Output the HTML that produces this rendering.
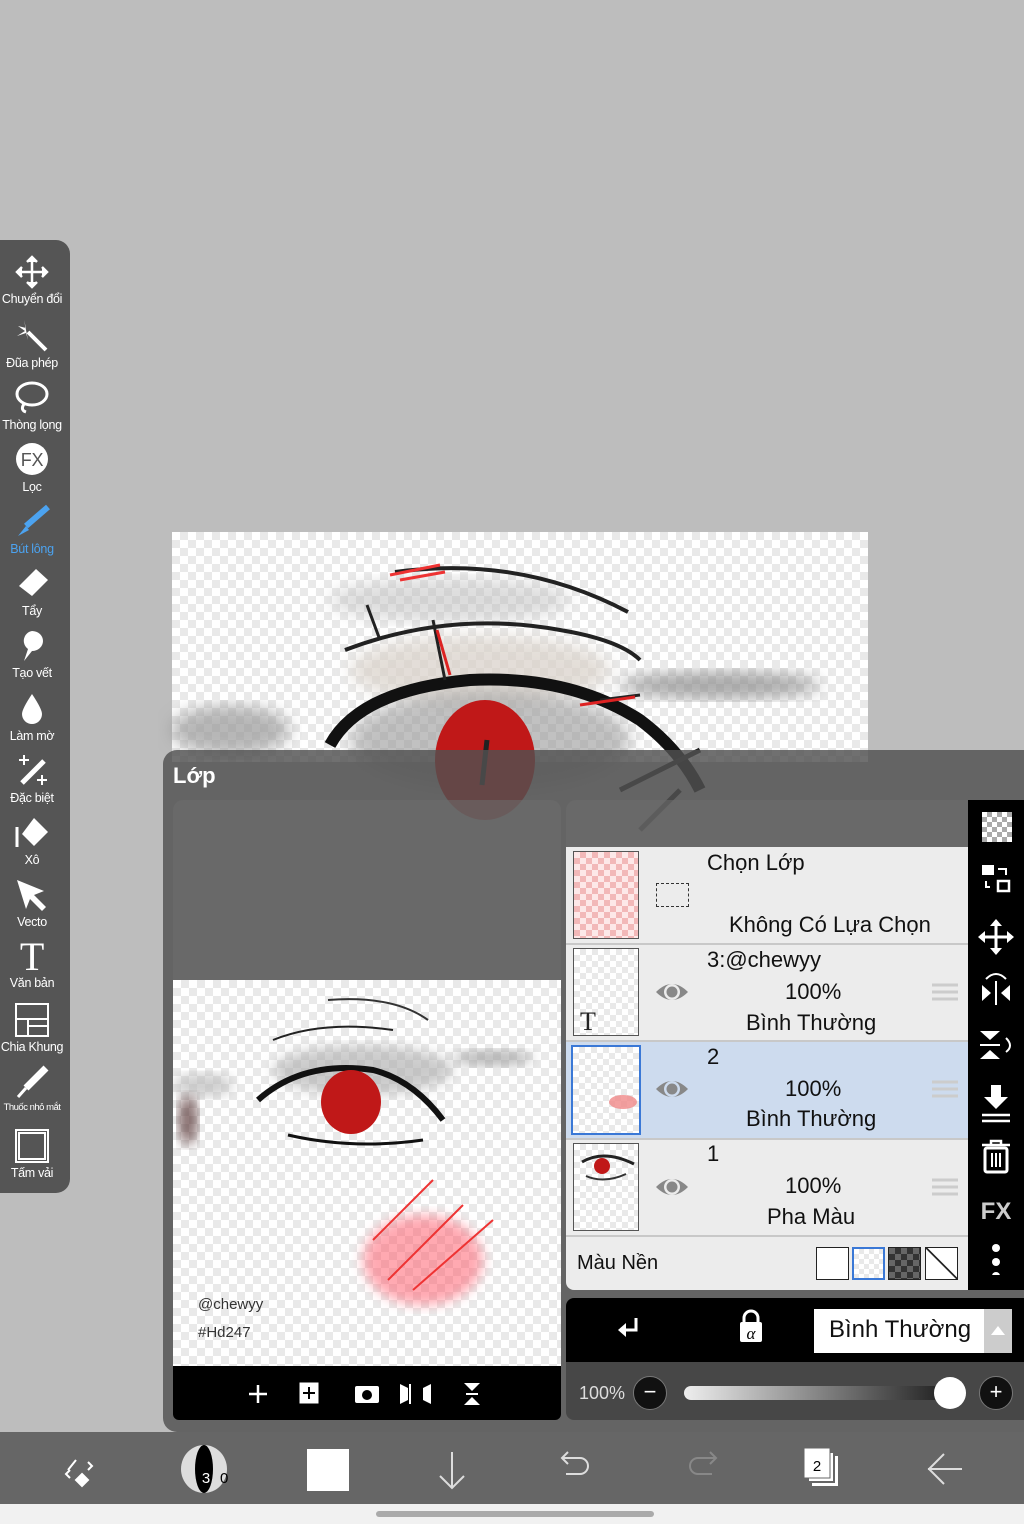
<!DOCTYPE html>
<html><head><meta charset="utf-8"><style>
*{margin:0;padding:0;box-sizing:border-box}
body{width:1024px;height:1524px;background:#bdbdbd;position:relative;overflow:hidden;font-family:"Liberation Sans","DejaVu Sans",sans-serif}
.abs{position:absolute}
.chk{background:repeating-conic-gradient(#e9e9e9 0 25%,#fff 0 50%) 0 0/16px 16px}
.tb{left:0;top:240px;width:70px;height:953px;background:#555;border-radius:0 14px 14px 0}
.tool{position:absolute;left:-4px;width:72px;text-align:center;color:#fff;font-size:12.5px;white-space:nowrap;letter-spacing:-0.3px}
.tool svg{display:block;margin:0 auto 2px}
.rowtxt{position:absolute;color:#111;font-size:22px}
</style></head><body>

<!-- canvas -->
<div class="abs chk" style="left:172px;top:532px;width:696px;height:230px"></div>
<svg class="abs" style="left:0;top:0" width="1024" height="1524">
<defs><filter id="b"><feGaussianBlur stdDeviation="8"/></filter></defs>
<g>
<ellipse cx="450" cy="600" rx="120" ry="22" fill="#bbb" opacity=".5" filter="url(#b)"/>
<ellipse cx="720" cy="685" rx="100" ry="14" fill="#888" opacity=".7" filter="url(#b)"/>
<ellipse cx="230" cy="730" rx="60" ry="25" fill="#999" opacity=".7" filter="url(#b)"/>
<ellipse cx="480" cy="670" rx="130" ry="35" fill="#d8d0c8" opacity=".7" filter="url(#b)"/>
<ellipse cx="490" cy="740" rx="140" ry="50" fill="#999" opacity=".6" filter="url(#b)"/>
<path d="M395 572 Q520 555 628 612" stroke="#222" stroke-width="4" fill="none"/>
<path d="M390 575 L440 565 M400 580 L445 572" stroke="#e33" stroke-width="3"/>
<path d="M345 650 Q450 610 560 630 Q620 640 640 660" stroke="#222" stroke-width="4" fill="none"/>
<path d="M330 745 Q360 690 470 680 Q570 675 640 720 Q680 750 700 790" stroke="#111" stroke-width="12" fill="none"/>
<path d="M367 605 L380 640 M433 620 L445 680 M600 700 L640 695" stroke="#222" stroke-width="3"/>
<path d="M437 630 L450 675 M580 705 L635 697" stroke="#d22" stroke-width="3"/>
<ellipse cx="485" cy="760" rx="50" ry="60" fill="#c01818"/>
<path d="M487 740 L482 785" stroke="#222" stroke-width="5"/>
<path d="M620 790 Q660 770 700 750 M640 830 L680 790" stroke="#222" stroke-width="5"/>
</g>
</svg>

<!-- toolbar -->
<div class="abs tb"></div>
<div class="tool" style="top:254px"><svg width="36" height="36" viewBox="0 0 36 36" fill="none" stroke="#fff" stroke-width="2.5"><path d="M18 3V33M3 18H33"/><path d="M13 8l5-5 5 5M13 28l5 5 5-5M8 13l-5 5 5 5M28 13l5 5-5 5" fill="#fff"/></svg>Chuyển đổi</div>
<div class="tool" style="top:318px"><svg width="36" height="36" viewBox="0 0 36 36"><path d="M14 14L32 32" stroke="#fff" stroke-width="4"/><path d="M10 2L12 10L4 8L11 13L3 18L12 15L14 22" fill="#fff"/></svg>Đũa phép</div>
<div class="tool" style="top:380px"><svg width="36" height="36" viewBox="0 0 36 36" fill="none" stroke="#fff" stroke-width="3"><ellipse cx="18" cy="14" rx="15" ry="11"/><path d="M10 24q-4 6 2 8"/></svg>Thòng lọng</div>
<div class="tool" style="top:442px"><svg width="36" height="36" viewBox="0 0 36 36"><circle cx="18" cy="17" r="16" fill="#fff"/><text x="18" y="24" font-size="18" text-anchor="middle" fill="#555" font-family="Liberation Sans">FX</text></svg>Lọc</div>
<div class="tool" style="top:504px;color:#4ca3f0"><svg width="36" height="36" viewBox="0 0 36 36"><path d="M34 3L12 22" stroke="#4ca3f0" stroke-width="6"/><path d="M12 22L4 32L15 26Z" fill="#4ca3f0"/></svg>Bút lông</div>
<div class="tool" style="top:566px"><svg width="36" height="36" viewBox="0 0 36 36"><path d="M22 3L34 14L18 30L5 20Z" fill="#fff"/></svg>Tẩy</div>
<div class="tool" style="top:628px"><svg width="36" height="36" viewBox="0 0 36 36"><path d="M18 3a11 10 0 1 1 0 20l-8 10l4-12a10 10 0 0 1 4-18z" fill="#fff"/></svg>Tạo vết</div>
<div class="tool" style="top:691px"><svg width="36" height="36" viewBox="0 0 36 36"><path d="M18 3Q28 18 28 23a10 10 0 0 1-20 0Q8 18 18 3z" fill="#fff"/></svg>Làm mờ</div>
<div class="tool" style="top:753px"><svg width="36" height="36" viewBox="0 0 36 36"><path d="M30 8L8 30" stroke="#fff" stroke-width="5"/><path d="M10 2v10M5 7h10M28 22v10M23 27h10" stroke="#fff" stroke-width="2"/></svg>Đặc biệt</div>
<div class="tool" style="top:815px"><svg width="36" height="36" viewBox="0 0 36 36"><path d="M20 3L34 17L20 31L8 19Z" fill="#fff"/><path d="M3 12v20" stroke="#fff" stroke-width="3"/></svg>Xô</div>
<div class="tool" style="top:877px"><svg width="36" height="36" viewBox="0 0 36 36"><path d="M3 3L30 14L20 18L32 30L28 34L16 22L12 32Z" fill="#fff"/></svg>Vecto</div>
<div class="tool" style="top:938px"><div style="font:40px 'Liberation Serif',serif;line-height:38px">T</div>Văn bản</div>
<div class="tool" style="top:1002px"><svg width="36" height="36" viewBox="0 0 36 36" fill="none" stroke="#fff" stroke-width="2"><rect x="2" y="2" width="32" height="32"/><path d="M2 17H34M14 17V34M14 24H34"/></svg>Chia Khung</div>
<div class="tool" style="top:1064px;font-size:9.5px;letter-spacing:-0.5px"><svg width="36" height="36" viewBox="0 0 36 36"><path d="M32 4L12 24" stroke="#fff" stroke-width="7"/><path d="M12 24L4 33" stroke="#fff" stroke-width="3"/></svg>Thuốc nhỏ mắt</div>
<div class="tool" style="top:1128px"><svg width="36" height="36" viewBox="0 0 36 36" fill="none" stroke="#fff" stroke-width="2"><rect x="2" y="2" width="32" height="32"/><rect x="5" y="5" width="26" height="26"/></svg>Tấm vải</div>

<!-- layer panel -->
<div class="abs" style="left:163px;top:750px;width:870px;height:682px;background:rgba(80,80,80,.82);border-radius:14px 0 0 14px"></div>
<div class="abs" style="left:173px;top:763px;color:#fff;font-size:22px;font-weight:bold">Lớp</div>
<div class="abs" style="left:173px;top:800px;width:388px;height:180px;background:rgba(110,110,110,.55);border-radius:10px 10px 0 0"></div>
<div class="abs" style="left:566px;top:800px;width:402px;height:47px;background:rgba(110,110,110,.55);border-radius:10px 0 0 0"></div>
<!-- preview -->
<div class="abs chk" style="left:173px;top:980px;width:388px;height:386px;overflow:hidden">
<svg width="388" height="386">
<defs><filter id="c"><feGaussianBlur stdDeviation="6"/></filter></defs>
<ellipse cx="190" cy="90" rx="90" ry="25" fill="#aaa" opacity=".6" filter="url(#c)"/>
<ellipse cx="320" cy="78" rx="40" ry="8" fill="#999" opacity=".7" filter="url(#c)"/>
<ellipse cx="30" cy="105" rx="30" ry="12" fill="#bbb" opacity=".7" filter="url(#c)"/>
<ellipse cx="250" cy="280" rx="60" ry="45" fill="#f56" opacity=".5" filter="url(#c)"/>
<path d="M155 20Q220 15 255 40" stroke="#333" stroke-width="2" fill="none"/>
<path d="M100 60Q150 40 220 50" stroke="#222" stroke-width="2" fill="none"/>
<path d="M85 120Q130 80 200 90Q240 100 270 140" stroke="#111" stroke-width="6" fill="none"/>
<path d="M115 155Q180 170 250 160" stroke="#111" stroke-width="3" fill="none"/>
<ellipse cx="178" cy="122" rx="30" ry="32" fill="#c01818"/>
<path d="M200 260L260 200M215 300L290 225M240 310L320 240" stroke="#e33" stroke-width="2"/>
<ellipse cx="15" cy="140" rx="10" ry="25" fill="#533" opacity=".7" filter="url(#c)"/>
<text x="25" y="329" font-size="15" fill="#333" font-family="Liberation Sans">@chewyy</text>
<text x="25" y="357" font-size="15" fill="#333" font-family="Liberation Sans">#Hd247</text>
</svg></div>
<div class="abs" style="left:173px;top:1366px;width:388px;height:54px;background:#000;border-radius:0 0 6px 6px;color:#fff">
<svg width="388" height="54"><g fill="#fff" stroke="#fff"><path d="M85 19v18M76 28h18" stroke-width="2.5"/><rect x="127" y="17" width="18" height="20" fill="#fff"/><path d="M136 21v12M130 27h12" stroke="#000" stroke-width="2"/><rect x="182" y="20" width="24" height="17" rx="2" stroke="none"/><circle cx="194" cy="29" r="5" fill="#000" stroke="none"/><path d="M237 18v20" stroke-width="2"/><path d="M235 22l-8 -4v20l8-4z M250 22l8-4v20l-8-4z" stroke="none"/><path d="M291 17h16l-8 8z M291 39h16l-8-8z" stroke="none"/><path d="M293 28h12" stroke-width="2"/></g></svg>
</div>

<!-- layer list -->
<div class="abs" style="left:566px;top:847px;width:402px;height:443px;background:#ececec;border-radius:0 0 0 8px"></div>
<div class="abs" style="left:566px;top:1042px;width:402px;height:96px;background:#cddbee"></div>
<div class="abs" style="left:566px;top:943px;width:402px;height:2px;background:#c8c8c8"></div>
<div class="abs" style="left:566px;top:1040px;width:402px;height:2px;background:#c8c8c8"></div>
<div class="abs" style="left:566px;top:1138px;width:402px;height:2px;background:#c8c8c8"></div>
<div class="abs" style="left:566px;top:1235px;width:402px;height:2px;background:#c8c8c8"></div>
<div class="abs" style="left:573px;top:851px;width:66px;height:88px;border:1px solid #555;background:repeating-conic-gradient(#f2b8b8 0 25%,#fde8e8 0 50%) 0 0/12px 12px"></div>
<div class="abs" style="left:656px;top:883px;width:33px;height:24px;border:1.5px dashed #333"></div>
<div class="rowtxt" style="left:707px;top:850px">Chọn Lớp</div>
<div class="rowtxt" style="left:729px;top:912px">Không Có Lựa Chọn</div>

<div class="abs chk" style="left:573px;top:948px;width:66px;height:88px;border:1px solid #555;background-size:12px 12px"><div style="position:absolute;left:6px;top:58px;font:26px 'Liberation Serif',serif;color:#222">T</div></div>
<div class="rowtxt" style="left:707px;top:947px">3:@chewyy</div>
<div class="rowtxt" style="left:785px;top:979px">100%</div>
<div class="rowtxt" style="left:746px;top:1010px">Bình Thường</div>

<div class="abs chk" style="left:571px;top:1045px;width:70px;height:90px;border:2px solid #3a78d6;background-size:12px 12px"><div style="position:absolute;left:36px;top:48px;width:28px;height:14px;background:#f08888;border-radius:50%;opacity:.8"></div></div>
<div class="rowtxt" style="left:707px;top:1044px">2</div>
<div class="rowtxt" style="left:785px;top:1076px">100%</div>
<div class="rowtxt" style="left:746px;top:1106px">Bình Thường</div>

<div class="abs chk" style="left:573px;top:1143px;width:66px;height:88px;border:1px solid #555;background-size:12px 12px;overflow:hidden"><svg width="66" height="88"><path d="M8 18Q30 5 60 20" stroke="#222" stroke-width="3" fill="none"/><ellipse cx="28" cy="22" rx="8" ry="8" fill="#c01818"/><path d="M12 32Q30 40 52 30" stroke="#333" stroke-width="2" fill="none"/></svg></div>
<div class="rowtxt" style="left:707px;top:1141px">1</div>
<div class="rowtxt" style="left:785px;top:1173px">100%</div>
<div class="rowtxt" style="left:767px;top:1204px">Pha Màu</div>

<svg class="abs" style="left:650px;top:970px" width="320" height="240">
<g fill="#888"><path d="M6 22Q22 6 38 22Q22 38 6 22z"/><path d="M6 119Q22 103 38 119Q22 135 6 119z"/><path d="M6 217Q22 201 38 217Q22 233 6 217z"/></g>
<g fill="#ececec"><circle cx="22" cy="22" r="8"/><circle cx="22" cy="217" r="8"/></g><circle cx="22" cy="119" r="8" fill="#cddbee"/>
<g fill="#888"><circle cx="22" cy="22" r="5.5"/><circle cx="22" cy="119" r="5.5"/><circle cx="22" cy="217" r="5.5"/></g>
<g stroke="#ccc" stroke-width="3"><path d="M282 15h26M282 22h26M282 29h26M282 112h26M282 119h26M282 126h26M282 210h26M282 217h26M282 224h26"/></g>
</svg>
<div class="rowtxt" style="left:577px;top:1252px;font-size:20px">Màu Nền</div>
<div class="abs" style="left:816px;top:1247px;width:33px;height:33px;border:1px solid #222;background:#fff"></div>
<div class="abs chk" style="left:852px;top:1247px;width:33px;height:33px;border:2px solid #3a78d6;background-size:10px 10px"></div>
<div class="abs" style="left:888px;top:1247px;width:33px;height:33px;border:1px solid #222;background:repeating-conic-gradient(#333 0 25%,#666 0 50%) 0 0/12px 12px"></div>
<div class="abs" style="left:925px;top:1247px;width:33px;height:33px;border:1px solid #222;background:linear-gradient(to top right,#fff 48%,#222 49%,#222 52%,#fff 53%)"></div>

<!-- right icons -->
<div class="abs" style="left:968px;top:800px;width:56px;height:490px;background:#000"></div>
<div class="abs" style="left:982px;top:812px;width:30px;height:30px;background:repeating-conic-gradient(#aaa 0 25%,#fff 0 50%) 0 0/10px 10px"></div>
<svg class="abs" style="left:968px;top:855px" width="56" height="420">
<g fill="#fff" stroke="#fff">
<rect x="14" y="10" width="12" height="10" stroke="none"/><rect x="30" y="26" width="11" height="10" fill="none" stroke-width="2.5"/><path d="M30 14h8v6M18 26v6h4" fill="none" stroke-width="2"/>
<path d="M28 68v28M14 82h28" stroke-width="3"/><path d="M22 71l6-7 6 7zM22 93l6 7 6-7zM17 76l-7 6 7 6zM39 76l7 6-7 6z" stroke="none"/>
<path d="M14 130l9 8-9 8zM42 130l-9 8 9 8z" stroke="none"/><path d="M28 126v24" stroke-width="2"/><path d="M18 124q10-10 20 0" fill="none" stroke-width="2"/>
<path d="M12 176h20l-10 9zM12 204h20l-10-9z" stroke="none"/><path d="M12 190h20" stroke-width="2"/><path d="M38 183q8 8 0 14" fill="none" stroke-width="2"/>
<path d="M23 230h10v12h7l-12 12-12-12h7z" stroke="none"/><path d="M14 260h28M14 266h28" stroke-width="2.5"/>
<path d="M14 290h28M23 290v-4h10v4" fill="none" stroke-width="2.5"/><rect x="17" y="293" width="22" height="24" rx="2" fill="none" stroke-width="3"/><path d="M24 298v14M28 298v14M32 298v14" stroke-width="2"/>
</g>
<text x="28" y="364" font-size="24" font-weight="bold" fill="#ccc" text-anchor="middle" font-family="Liberation Sans" stroke="none">FX</text>
<g fill="#fff"><circle cx="28" cy="393" r="4"/><circle cx="28" cy="407" r="4"/><circle cx="28" cy="421" r="4"/></g>
</svg>

<!-- blend bar -->
<div class="abs" style="left:566px;top:1298px;width:458px;height:64px;background:#000;border-radius:8px 0 0 0"></div>
<svg class="abs" style="left:566px;top:1298px" width="200" height="64"><path d="M70 20v12h-12" stroke="#fff" stroke-width="3" fill="none"/><path d="M52 32l8-7v14z" fill="#fff"/>
<rect x="174" y="24" width="22" height="20" rx="2" fill="#fff"/><path d="M178 24v-4a7 7 0 0 1 14 0v4" stroke="#fff" stroke-width="3" fill="none"/><text x="185" y="41" font-size="17" font-style="italic" text-anchor="middle" fill="#000" font-family="Liberation Serif">α</text></svg>
<div class="abs" style="left:814px;top:1309px;width:170px;height:44px;background:#fff;font-size:24px;padding:7px 0 0 15px;color:#111">Bình Thường</div>
<div class="abs" style="left:984px;top:1309px;width:28px;height:44px;background:#ccc"><div style="margin:17px auto 0;width:0;height:0;border-left:7px solid transparent;border-right:7px solid transparent;border-bottom:9px solid #fff"></div></div>
<div class="abs" style="left:566px;top:1362px;width:458px;height:58px;background:#474747;border-radius:0 0 0 8px"></div>
<div class="abs" style="left:579px;top:1383px;color:#ddd;font-size:18px">100%</div>
<div class="abs" style="left:633px;top:1376px;width:34px;height:34px;border-radius:50%;background:#111;border:1px solid #777;color:#fff;text-align:center;font-size:22px;line-height:30px">−</div>
<div class="abs" style="left:684px;top:1386px;width:260px;height:14px;border-radius:7px;background:linear-gradient(to right,#eee,#222)"></div>
<div class="abs" style="left:934px;top:1377px;width:32px;height:32px;border-radius:50%;background:#fff"></div>
<div class="abs" style="left:979px;top:1376px;width:34px;height:34px;border-radius:50%;background:#111;border:1px solid #777;color:#fff;text-align:center;font-size:22px;line-height:30px">+</div>

<!-- bottom bar -->
<div class="abs" style="left:0;top:1432px;width:1024px;height:72px;background:#666"></div>
<div class="abs" style="left:0;top:1504px;width:1024px;height:20px;background:#f1f1f1"></div>
<div class="abs" style="left:376px;top:1511px;width:278px;height:6px;border-radius:3px;background:#aaa"></div>
<svg class="abs" style="left:0;top:1432px" width="1024" height="72">
<g stroke="#fff" fill="none" stroke-width="2">
<path d="M68 38l8-10M88 30l4 4-4 4M70 46l-4-4 4-4"/><path d="M82 42l6 6-6 6-6-6z" fill="#fff"/>
</g>
<ellipse cx="204" cy="37" rx="23" ry="24" fill="#ddd"/><ellipse cx="204" cy="37" rx="9" ry="24" fill="#000"/>
<text x="206" y="51" font-size="15" fill="#fff" text-anchor="middle" font-family="Liberation Sans">3</text><text x="220" y="51" font-size="15" fill="#000" font-family="Liberation Sans">0</text>
<rect x="307" y="17" width="42" height="42" fill="#fff"/>
<g stroke="#ddd" fill="none" stroke-width="2"><path d="M452 20v36M440 44l12 12 12-12"/>
<path d="M566 42h14a8 8 0 0 0 0-16h-18M568 20l-6 6 6 6"/></g>
<g stroke="#888" fill="none" stroke-width="2"><path d="M712 42h-14a8 8 0 0 1 0-16h18M710 20l6 6-6 6"/></g>
<rect x="812" y="24" width="26" height="30" fill="#fff"/><rect x="808" y="20" width="26" height="30" fill="#fff" stroke="#666" stroke-width="2"/><rect x="804" y="16" width="26" height="30" fill="#fff" stroke="#666" stroke-width="1"/>
<text x="817" y="39" font-size="15" text-anchor="middle" fill="#000" font-family="Liberation Sans">2</text>
<path d="M962 37h-34M944 22l-15 15 15 15" stroke="#ddd" stroke-width="2" fill="none"/>
</svg>
</body></html>
